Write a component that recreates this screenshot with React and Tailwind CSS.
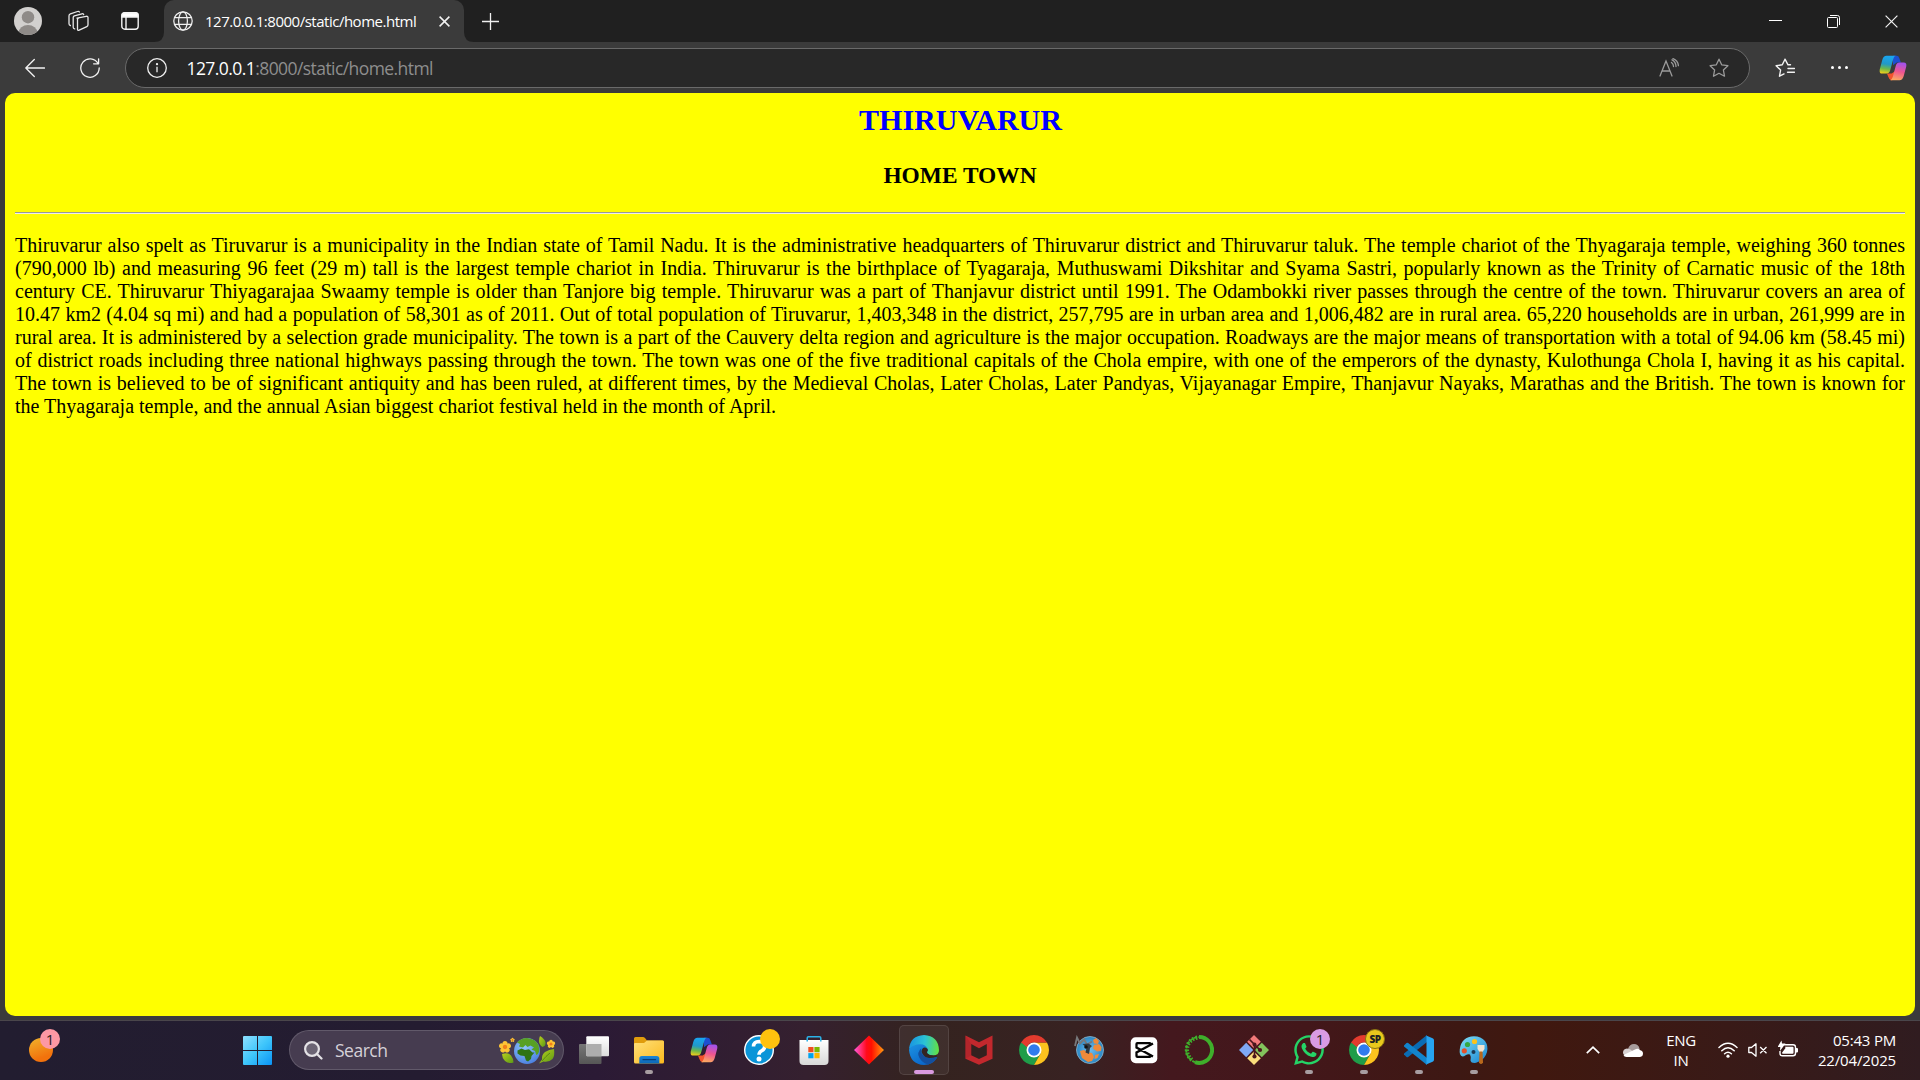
import React from "react";
import { FaWhatsapp } from "react-icons/fa";

const Svg = ({ s = 30, vb, className = "", children, ...rest }) => (
  <svg width={s} height={s} viewBox={vb || `0 0 ${s} ${s}`} fill="none" className={`block shrink-0 ${className}`} {...rest}>
    {children}
  </svg>
);

/* ---------- browser icons ---------- */
const Avatar = () => (
  <Svg s={28}>
    <defs><clipPath id="av"><circle cx="14" cy="14" r="14" /></clipPath></defs>
    <g clipPath="url(#av)">
      <rect width="28" height="28" fill="#d2d0ce" />
      <circle cx="14" cy="10.2" r="6.2" fill="#8f8b88" />
      <ellipse cx="14" cy="25.5" rx="9.3" ry="7.5" fill="#8f8b88" />
    </g>
  </Svg>
);
const Workspaces = () => (
  <Svg s={22} className="-ml-[1px]" stroke="#e8e8e8" strokeWidth="1.3" strokeLinejoin="round" strokeLinecap="round">
    <path d="M10 8.2 19.2 6.3q1.800-.3 1.800 1.300v7.200q0 1.300-1.200 1.800l-7.600 3.600q-1.700.7-1.700-1V9.600q0-1.200 1-1.500z" />
    <path d="M16.700 4.600q-.3-1.200-1.800-.8L7.400 5.900q-1.200.4-1.200 1.700v9.600q0 1.400 1.500 1.600" />
    <path d="M12.400 2q-.5-1-1.900-.5L3.400 3.900Q2 4.400 2 5.800v8q0 1.400 1.400 1.700" />
  </Svg>
);
const TabActions = () => (
  <Svg s={18} stroke="#f4f4f4" strokeWidth="1.4">
    <rect x=".8" y=".8" width="16.4" height="16.4" rx="3" />
    <path d="M1 5V3q0-2 2-2h12q2 0 2 2v2z" fill="#fff" />
    <path d="M5 5v12" />
  </Svg>
);
const Globe = () => (
  <Svg s={20} stroke="#f0f0f0" strokeWidth="1.25">
    <circle cx="10" cy="10" r="9.2" />
    <ellipse cx="10" cy="10" rx="4.4" ry="9.2" />
    <path d="M1.7 6.7h16.6M1.7 13.3h16.6" />
  </Svg>
);
const Cross = ({ s, w = 1.3 }) => (
  <Svg s={s} stroke="#f2f2f2" strokeWidth={w}><path d={`M.6.6 ${s - 0.6} ${s - 0.6}M${s - 0.6}.6.6 ${s - 0.6}`} /></Svg>
);
const star = "M10 1.2l2.7 5.6 6.2.9-4.5 4.3 1.1 6.2-5.5-2.9-5.5 2.9 1.1-6.2L1.1 7.7l6.2-.9z";

const Copilot = ({ s, id }) => (
  <Svg s={s} vb="0 0 30 30">
    <defs>
      <linearGradient id={id + "a"} x1="8" y1="2" x2="5" y2="21" gradientUnits="userSpaceOnUse">
        <stop stopColor="#19a5f0" /><stop offset=".45" stopColor="#2199c8" /><stop offset=".72" stopColor="#6cb84b" /><stop offset="1" stopColor="#f5cf18" />
      </linearGradient>
      <linearGradient id={id + "b"} x1="24" y1="10" x2="20" y2="28" gradientUnits="userSpaceOnUse">
        <stop stopColor="#a452ea" /><stop offset=".5" stopColor="#ef5590" /><stop offset="1" stopColor="#fba663" />
      </linearGradient>
    </defs>
    <path d="M15 2h4q2 0 2.800 2.500L23.500 9H19l-4 3z" fill="#1d4fd0" />
    <path d="M8.500 21h5l4.500-3-1 7q-.8 3-3 3h-1q-2 0-2.800-3z" fill="#f2542d" />
    <path d="M8 2h10q-2 .6-2.800 3.500L12 17.500q-1 3.500-4 3.500H3.500Q0 21 .8 16.500L3.500 6.500Q4.800 2 8 2z" fill={`url(#${id}a)`} />
    <path d="M22 28H12q2-.6 2.800-3.500L18 12.500Q19 9 22 9h4.500q3.500 0 2.700 4.500l-2.700 10Q25.200 28 22 28z" fill={`url(#${id}b)`} />
  </Svg>
);

/* ---------- taskbar icons ---------- */
const Start = () => (
  <Svg s={29}>
    <defs>
      <linearGradient id="win" x1="0" y1="0" x2="29" y2="29" gradientUnits="userSpaceOnUse">
        <stop stopColor="#8fe0ff" /><stop offset=".5" stopColor="#3fc6fb" /><stop offset="1" stopColor="#0a93f5" />
      </linearGradient>
    </defs>
    <path d="M0 1q0-1 1-1h13v14H0zM15 0h13q1 0 1 1v13H15zM0 15h14v14H1q-1 0-1-1zM15 15h14v13q0 1-1 1H15z" fill="url(#win)" />
  </Svg>
);

const Flower = ({ x, y, r }) => (
  <g transform={`translate(${x} ${y}) scale(${r})`}>
    {[0, 72, 144, 216, 288].map((a) => <circle key={a} cx="0" cy="-.6" r=".42" fill="#fdc535" transform={`rotate(${a})`} />)}
    <circle r=".36" fill="#f07f1b" />
  </g>
);
const EarthArt = () => (
  <svg width="58" height="30" viewBox="0 0 58 30" fill="none" className="block shrink-0">
    <defs>
      <radialGradient id="sea" cx=".4" cy=".35" r=".7"><stop stopColor="#8fc5fb" /><stop offset="1" stopColor="#4a7fe0" /></radialGradient>
      <linearGradient id="leaf" x1="0" y1="0" x2="1" y2="1"><stop stopColor="#b8cf1c" /><stop offset="1" stopColor="#5c9a16" /></linearGradient>
    </defs>
    <Flower x={7} y={12} r={6} />
    <Flower x={14.500} y={5} r={2.200} />
    <Flower x={53} y={9} r={4.200} />
    <path d="M4 19q6-2 9 1.500 2.500 3 2.500 7-5 1.500-8.500-1.500Q4 23 4 19z" fill="url(#leaf)" />
    <path d="M42 1q5 3 5.500 6.500Q48 11 44.500 12 41 9.500 41 6q0-3 1-5z" fill="url(#leaf)" />
    <path d="M56 14q1 7-1.500 10-3.500 3.500-9 2.500L41 28.500l3-4q-.5-5 3-7.500 4-2.500 9-3z" fill="url(#leaf)" />
    <path d="M44 26q4-5 8-8" stroke="#4f7d10" strokeWidth=".8" />
    <circle cx="29" cy="16" r="13" fill="url(#sea)" />
    <path d="M19 7.500q4-4.500 10-4.500 8 .5 11.500 7l.8 6q-1 3.500-3 4l-1.300-4-3.500-1.500 2.500-2-3.500-2-3 1.500-2-2-2.500 2.500-4-1 1-2.500z" fill="#58a024" />
    <path d="M19.500 15.500l4-2 3.500 1.500 4-.8 3.500 3.300h2l-3 3.500-.5 3-3 2.500-2-1-1.500-4.500-4-.5-3-2z" fill="#2f7415" />
  </svg>
);

const TaskView = () => (
  <Svg>
    <defs>
      <linearGradient id="tv" x1="0" y1="0" x2="0" y2="1"><stop stopColor="#ffffff" /><stop offset="1" stopColor="#dcdcdc" /></linearGradient>
      <linearGradient id="tv2" x1="0" y1="0" x2="0" y2="1"><stop stopColor="#777" /><stop offset="1" stopColor="#565656" /></linearGradient>
    </defs>
    <rect x="0" y="9" width="22.500" height="20" rx="1" fill="url(#tv2)" />
    <rect x="7.300" y="1.200" width="22.700" height="20" rx="1" fill="url(#tv)" />
    <path d="M7.300 9h15.200v12.200H8.300q-1 0-1-1z" fill="#adadad" />
  </Svg>
);
const Explorer = () => (
  <Svg>
    <defs>
      <linearGradient id="fo" x1="0" y1="0" x2="1" y2="1"><stop stopColor="#ffe07a" /><stop offset="1" stopColor="#fbb91d" /></linearGradient>
      <linearGradient id="fb" x1="0" y1="0" x2="0" y2="1"><stop stopColor="#1b86d8" /><stop offset="1" stopColor="#0c66b5" /></linearGradient>
    </defs>
    <path d="M0 3.500Q0 2 1.500 2H9q1 0 2 1l2 2.500H28q2 0 2 2V12H0z" fill="#e09c0c" />
    <path d="M0 9q0-1 1-1h9l3-2.500h16q1 0 1 1.500v20q0 1.500-1.500 1.500h-27Q0 28.500 0 27z" fill="url(#fo)" />
    <path d="M5.300 28.500v-5q0-2.500 2.500-2.500h15q2.500 0 2.500 2.500v5z" fill="url(#fb)" />
    <path d="M9 24.700h12.500" stroke="#073f7a" strokeWidth="1.200" strokeLinecap="round" />
  </Svg>
);
const Help = () => (
  <Svg>
    <circle cx="15" cy="15" r="14.300" fill="#0a95d8" stroke="#fff" strokeWidth="1.400" />
    <path d="M9.500 11.500q.3-5 5.500-5 5.700.2 5.700 4.700 0 2.800-3 4.600-2.700 1.500-2.700 4" stroke="#fff" strokeWidth="3.600" />
    <circle cx="15" cy="24" r="2.500" fill="#fff" />
  </Svg>
);
const Store = () => (
  <Svg>
    <defs><linearGradient id="st" x1="0" y1="0" x2="0" y2="1"><stop stopColor="#fff" /><stop offset="1" stopColor="#d8d8d8" /></linearGradient></defs>
    <path d="M.5 5h29v21q0 4-4 4h-21q-4 0-4-4z" fill="url(#st)" />
    <path d="M8.200 6.500V3q0-1.300 1.300-1.300h11q1.300 0 1.300 1.300v3.500" stroke="#2bb2e8" strokeWidth="1.500" />
    <path d="M9.300 12h5.200v5.200H9.300z" fill="#f04e1f" />
    <path d="M15.400 12h5.200v5.200h-5.200z" fill="#7db700" />
    <path d="M9.300 18.100h5.200v5.200H9.300z" fill="#00a3ee" />
    <path d="M15.400 18.100h5.200v5.200h-5.200z" fill="#fdb700" />
  </Svg>
);
const Diamond = () => (
  <Svg>
    <defs><linearGradient id="di" x1="0" y1="0" x2="1" y2="0"><stop stopColor="#ff5be0" /><stop offset=".42" stopColor="#ff0a1a" /><stop offset=".58" stopColor="#ff1000" /><stop offset="1" stopColor="#ff9a10" /></linearGradient></defs>
    <path d="M15 .5 30 15 15 29.500 0 15z" fill="url(#di)" />
  </Svg>
);
const Edge = () => (
  <Svg vb="0 0 24 24">
    <defs>
      <linearGradient id="e1" x1="2" y1="8" x2="23" y2="10" gradientUnits="userSpaceOnUse"><stop stopColor="#1c9be0" /><stop offset=".5" stopColor="#2bc3d4" /><stop offset="1" stopColor="#5fdf4c" /></linearGradient>
      <linearGradient id="e2" x1="2" y1="8" x2="12" y2="24" gradientUnits="userSpaceOnUse"><stop stopColor="#1b8fe0" /><stop offset="1" stopColor="#0a66c8" /></linearGradient>
    </defs>
    <path d="M0 12Q1 6 8 6q7 0 8 6l-1 4 7.500 2Q19 24 12 24 1 23.500 0 12z" fill="url(#e2)" />
    <path d="M9.800 10.500Q6 14 8.200 18q2.300 4.500 7.300 5.500 4.500-1.500 7-5.300.300-.900-.600-.600-5.400 2-9.300-.400Q8.800 14.500 9.800 10.500z" fill="#134f9e" />
    <path d="M24 12.200q0 4-4.300 4.200-3.700 0-5-1.800-.8-1 .2-1.800.4-.6 0-1.600Q13.500 7.500 9 7.400 3.500 7.500.1 11 1 .6 12 0q11.500.5 12 12.200z" fill="url(#e1)" />
    <path d="M14.900 11.200q-2.300-2-4-.500-1.600 1.800-.300 4 1.800 3.200 5.400 3.700 3 .200 6-1l.400-1.700q-1.200.700-2.700.700-3.700 0-5-1.800-.8-1 .2-1.800.4-.6 0-1.600z" fill="#342423" />
  </Svg>
);
const McAfee = () => (
  <Svg>
    <path d="M1.500.5 15 7.200 28.500.5v23.300L15 29.800 1.500 23.800z" fill="#c2282d" />
    <path d="M7.200 9 15 13.300 22.800 9v11.300L15 24l-7.800-3.700z" fill="#33211f" />
    <path d="M1.500.5v23.300l5.700-3.500V9z" fill="#a82229" opacity=".55" />
  </Svg>
);
const Chrome = () => (
  <Svg>
    <path d="M2.010 7.500A15 15 0 0 0 15 30l6.500-11.250L15 15z" fill="#1f9d49" />
    <path d="M27.990 7.500H15l6.500 11.250L15 30A15 15 0 0 0 27.990 7.500z" fill="#fcc31e" />
    <path d="M2.010 7.500A15 15 0 0 1 27.990 7.500H15q-5.500 0-7 5z" fill="#e33b2e" />
    <path d="M2.010 7.500 8.500 18.750 12 15 8 12.500z" fill="#1f9d49" />
    <circle cx="15" cy="15" r="7.500" fill="#fff" />
    <circle cx="15" cy="15" r="5.800" fill="#2f7bee" />
  </Svg>
);
const SatelliteGlobe = () => (
  <Svg>
    <defs><radialGradient id="sg"><stop stopColor="#6dbdf0" /><stop offset="1" stopColor="#2a87c4" /></radialGradient></defs>
    <circle cx="16" cy="15" r="13.500" fill="url(#sg)" stroke="#8fb6cc" strokeWidth=".8" />
    <path d="M19 5l3-2 3 3-1 3-4-.5zM20 10l5-1 2.500 3-.5 4-4 .5-4-3zM6 16l4-1 3 2 5 1 2 4-2 4-4 1-6-4zM21 20l4-1-1.500 4-3 1z" fill="#ef8a3a" />
    <path d="M1 11 3 2.500l3 6 4-4 3 5 5-3" stroke="#77797c" strokeWidth="1.800" />
    <path d="M8.500 9l6-.5 3.500 2.500-2 2-1 6-3.500-1.500 1-4.500z" fill="#303a44" />
    <circle cx="12" cy="12" r="1.800" fill="#111" />
  </Svg>
);
const CapCut = () => (
  <Svg>
    <rect x="1.700" y="2.200" width="26.600" height="26" rx="5" fill="#fff" />
    <path d="M24 8.500 7.500 17.500V21q0 .8.800.8h12.400q.8 0 .8-.8v-1.800M24 21.500 7.500 12.500V9q0-.8.800-.8h12.400q.8 0 .8.800v1.800" stroke="#050505" strokeWidth="2.300" />
  </Svg>
);
const Anaconda = () => (
  <Svg>
    <path d="M15 2.100A12.900 12.900 0 1 1 11 27.200" stroke="#3faf2b" strokeWidth="4" />
    <path d="M11 27.200A12.900 12.900 0 0 1 15 2.100" stroke="#3faf2b" strokeWidth="1.900" strokeDasharray="3 1.400" />
    <path d="M8 24.800A12.300 12.300 0 0 1 15 2.500" stroke="#3faf2b" strokeWidth="4.200" strokeDasharray="1.700 1.700" />
  </Svg>
);
const Git = () => (
  <Svg>
    <path d="M15 0l6.800 6.800L15 13.600 8.200 6.800z" fill="#f27a7a" />
    <path d="M22.800 7.800 30 15l-7.200 7.200L15.800 15z" fill="#83c35c" />
    <path d="M7.200 7.800 14.200 15l-7 7.200L0 15z" fill="#7fa9f5" />
    <path d="M15 16.400l6.800 6.800L15 30l-6.800-6.800z" fill="#fbdd7c" />
    <path d="M10.500 4.500 15.500 9.500v12.500M15.500 9.500l5.500 5.500" stroke="#4a161c" strokeWidth="1.700" />
    <circle cx="15.500" cy="9.500" r="2" fill="#4a161c" /><circle cx="21" cy="15" r="2.100" fill="#4a161c" /><circle cx="15.500" cy="21.500" r="2.100" fill="#4a161c" />
  </Svg>
);
const VSCode = () => (
  <Svg>
    <path d="M0 19.500 2.500 22q.8.600 1.700 0L23 7V0L.300 18.300q-.700.600-.300 1.200z" fill="#0a6cb4" />
    <path d="M0 10.500 2.500 8q.8-.600 1.700 0L23 23v7L.300 11.700q-.700-.600-.300-1.200z" fill="#1284cc" />
    <path d="M21.500.2 28.600 3.200Q30 3.800 30 5.300v19.400q0 1.500-1.400 2.100l-7.100 3q1 .2 1-1.300V1.500q0-1.500-1-1.300z" fill="#27a5f2" />
  </Svg>
);
const Paint = () => (
  <Svg>
    <defs><linearGradient id="pa" x1="0" y1="0" x2="1" y2="1"><stop stopColor="#7fe0f7" /><stop offset="1" stopColor="#1783d0" /></linearGradient></defs>
    <path d="M15 1.300q7 0 11 4.700 3.500 5 2 11-2 7-8 9.500-3.500 1.500-4.500 1.500-3.500 0-4-2.500 1-3.500-.5-6-2-.6-4 .5-2 1.500-3.500 1.500Q0 21 .8 14 2.500 2 15 1.300z" fill="url(#pa)" />
    <circle cx="15.500" cy="6.500" r="2.600" fill="#fbc21c" /><circle cx="8.500" cy="9.500" r="2.600" fill="#35a844" /><circle cx="5.300" cy="15.800" r="2.600" fill="#e4512b" />
    <circle cx="14.500" cy="17" r="2" fill="#1b3c58" />
    <path d="M18.500 10h7v4l-2 3h-3l-2-3z" fill="#f1e3d0" />
    <path d="M20.500 16.500h3l.5 11q-2 3-4 0z" fill="#b9681c" />
  </Svg>
);

const TaskCell = ({ children, running, active, badge }) => (
  <div className="relative flex h-[50px] w-[55px] shrink-0 items-center justify-center">
    {active && <div className="absolute inset-y-0 left-[2.500px] right-[2.500px] rounded-[5px] border border-white/10 bg-white/[0.06]" />}
    <div className="relative">{children}</div>
    {badge}
    {running && <div className="absolute bottom-[1px] left-[23.500px] h-[4px] w-[8px] rounded-full bg-[#a79da1]" />}
    {active && <div className="absolute bottom-[1px] left-[17.500px] h-[4px] w-[20px] rounded-full bg-[#d99be0]" />}
  </div>
);
const Badge = ({ className, children }) => (
  <div className={`absolute left-[28.500px] top-[4px] flex h-[20px] w-[20px] items-center justify-center rounded-full font-['Open_Sans',sans-serif] leading-none text-[#222] ${className}`}>{children}</div>
);

const Glyph = ({ w, children }) => <div className={`flex shrink-0 items-center justify-center ${w}`}>{children}</div>;

export default function App() {
  return (
    <div className="flex h-[1080px] w-[1920px] flex-col overflow-hidden bg-[#3b3b3b] font-['Open_Sans',sans-serif] text-white">
      {/* tab strip */}
      <header className="flex h-[42px] shrink-0 bg-[#202020]">
        <Glyph w="w-[56px]"><Avatar /></Glyph>
        <Glyph w="w-[44px]"><Workspaces /></Glyph>
        <Glyph w="w-[60px]"><TabActions /></Glyph>
        <div className="relative ml-[4px] flex w-[300px] items-center rounded-t-[10px] bg-[#3b3b3b] pl-[9px]">
          <svg className="absolute -left-[10px] bottom-0" width="10" height="10"><path d="M10 0v10H0Q10 10 10 0z" fill="#3b3b3b" /></svg>
          <svg className="absolute -right-[10px] bottom-0" width="10" height="10"><path d="M0 0v10h10Q0 10 0 0z" fill="#3b3b3b" /></svg>
          <Globe />
          <span className="mb-[1px] ml-[12px] w-[234px] whitespace-nowrap text-[15px] leading-[20px] tracking-[-0.490px]">127.0.0.1:8000/static/home.html</span>
          <Cross s={11} w={1.500} />
        </div>
        <Glyph w="w-[53px]"><Svg s={17} stroke="#f0f0f0" strokeWidth="1.300"><path d="M8.500 0v17M0 8.500h17" /></Svg></Glyph>
        <div className="ml-auto flex">
          <Glyph w="w-[58px]"><div className="mb-[2px] h-px w-[13px] bg-white" /></Glyph>
          <Glyph w="w-[58px]"><Svg s={13} stroke="#fff" strokeWidth="1"><rect x=".5" y="2.500" width="10" height="10" rx="1" /><path d="M3 .5h7.500q2 0 2 2V10" /></Svg></Glyph>
          <Glyph w="w-[58px]"><Cross s={13} w={1.200} /></Glyph>
        </div>
      </header>

      {/* toolbar */}
      <div className="flex h-[51px] shrink-0 items-center pl-[7.500px]">
        <Glyph w="w-[55px]"><Svg s={20} stroke="#f2f2f2" strokeWidth="1.300" strokeLinecap="round" strokeLinejoin="round"><path d="M19.500 10H.8M9.300 1.500.8 10l8.500 8.500" /></Svg></Glyph>
        <Glyph w="w-[55px]"><Svg s={20} stroke="#f2f2f2" strokeWidth="1.300" strokeLinecap="round" strokeLinejoin="round"><path d="M18 5.500A9.200 9.200 0 1 0 19.200 10M18.600.8v5h-5" /></Svg></Glyph>
        <div className="ml-[7.500px] flex h-[40px] w-[1625px] items-center rounded-full border border-[#6a6a6a] bg-[#282828] pl-[21px]">
          <Svg s={20} stroke="#f0f0f0" strokeWidth="1.300"><circle cx="10" cy="10" r="9.300" /><path d="M10 8.800v5.500" /><circle cx="10" cy="6.200" r=".5" fill="#fff" /></Svg>
          <span className="ml-[19.500px] whitespace-nowrap text-[17.500px] leading-[24px] tracking-[-0.570px] text-[#8e8e8e]"><span className="text-white">127.0.0.1</span>:8000/static/home.html</span>
          <div className="ml-auto flex pr-[5px]">
            <Glyph w="w-[50px]">
              <Svg s={20} stroke="#9b9b9b" strokeWidth="1.300" strokeLinecap="round"><path d="M1 18 7 3l6 15M3.200 13h7.600M12.500 4.500q2 1.500 2 4M13 1.800q4 2 4 6.700M14 .6q5 2 5.400 7" /></Svg>
            </Glyph>
            <Glyph w="w-[50px]"><Svg s={20} stroke="#9b9b9b" strokeWidth="1.300" strokeLinejoin="round"><path d={star} /></Svg></Glyph>
          </div>
        </div>
        <div className="ml-[7.500px] flex">
          <Glyph w="w-[55px]">
            <Svg s={20} stroke="#f2f2f2" strokeWidth="1.400" strokeLinejoin="round" strokeLinecap="round"><path d="M13 6.800 10 1.200 7.300 6.800l-6.200.9 4.500 4.300-1.100 6.200 4.500-2.300M13 6.800h2.500M13 10.500h6.500M12.500 14.200h7" /></Svg>
          </Glyph>
          <Glyph w="w-[54px]"><div className="flex gap-[4px]"><i className="h-[3px] w-[3px] rounded-full bg-white" /><i className="h-[3px] w-[3px] rounded-full bg-white" /><i className="h-[3px] w-[3px] rounded-full bg-white" /></div></Glyph>
          <Glyph w="w-[52px]"><Copilot s={28} id="c1" /></Glyph>
        </div>
      </div>

      {/* page */}
      <main className="mx-[5px] h-[923px] shrink-0 rounded-[10px] bg-[#ffff00] px-[10px] pt-[10px] font-['Liberation_Serif',serif] text-black">
        <h2 className="pl-[1px] text-center text-[30px] font-bold leading-[34px] text-[#0000ff]">THIRUVARUR</h2>
        <h3 className="mt-[25px] text-center text-[23.400px] font-bold leading-[27px]">HOME TOWN</h3>
        <div className="mt-[23px] h-[2px] border-t border-t-[#9a9a9a] border-b border-b-[#eeeeee]" />
        <p className="mt-[20px] text-justify text-[20px] leading-[23px]">
          Thiruvarur also spelt as Tiruvarur is a municipality in the Indian state of Tamil Nadu. It is the administrative headquarters of Thiruvarur district and Thiruvarur taluk. The temple chariot of the Thyagaraja temple, weighing 360 tonnes (790,000 lb) and measuring 96 feet (29 m) tall is the largest temple chariot in India. Thiruvarur is the birthplace of Tyagaraja, Muthuswami Dikshitar and Syama Sastri, popularly known as the Trinity of Carnatic music of the 18th century CE. Thiruvarur Thiyagarajaa Swaamy temple is older than Tanjore big temple. Thiruvarur was a part of Thanjavur district until 1991. The Odambokki river passes through the centre of the town. Thiruvarur covers an area of 10.47 km2 (4.04 sq mi) and had a population of 58,301 as of 2011. Out of total population of Tiruvarur, 1,403,348 in the district, 257,795 are in urban area and 1,006,482 are in rural area. 65,220 households are in urban, 261,999 are in rural area. It is administered by a selection grade municipality. The town is a part of the Cauvery delta region and agriculture is the major occupation. Roadways are the major means of transportation with a total of 94.06 km (58.45 mi) of district roads including three national highways passing through the town. The town was one of the five traditional capitals of the Chola empire, with one of the emperors of the dynasty, Kulothunga Chola I, having it as his capital. The town is believed to be of significant antiquity and has been ruled, at different times, by the Medieval Cholas, Later Cholas, Later Pandyas, Vijayanagar Empire, Thanjavur Nayaks, Marathas and the British. The town is known for the Thyagaraja temple, and the annual Asian biggest chariot festival held in the month of April.
        </p>
      </main>

      {/* taskbar */}
      <footer className="mt-[4px] flex h-[60px] shrink-0 items-center border-t border-[#4a464b] bg-[linear-gradient(90deg,#221d30_0%,#241c31_22%,#2b1a35_31%,#35202f_42%,#34231f_48%,#382222_56%,#44181e_61%,#43171a_68%,#3d1813_76%,#40180f_80%,#391a17_90%,#301c20_100%)] pb-px">
        <div className="relative ml-[29px] h-[24px] w-[24px] rounded-full bg-[linear-gradient(160deg,#f0b32c,#f2720c_75%)]">
          <div className="absolute left-[11px] -top-[9px] flex h-[20px] w-[20px] items-center justify-center rounded-full bg-[#fd98a4] text-[15px] leading-none text-[#2a1c20]">1</div>
        </div>
        <div className="ml-[190px]"><Start /></div>
        <div className="ml-[17px] flex h-[40px] w-[275px] items-center rounded-full border border-white/15 bg-[#463c50] pl-[14px] pr-[7px]">
          <Svg s={19} stroke="#e4e2e6" strokeWidth="2.200" strokeLinecap="round"><circle cx="8" cy="8" r="6.900" fill="#6b6474" /><path d="m13 13 4.500 4.500" /></Svg>
          <span className="ml-[12px] text-[17.500px] leading-[24px] tracking-[-0.500px] text-[#d5d1d8]">Search</span>
          <div className="ml-auto"><EarthArt /></div>
        </div>
        <div className="ml-[2.500px] flex">
          <TaskCell><TaskView /></TaskCell>
          <TaskCell running><Explorer /></TaskCell>
          <TaskCell><Copilot s={28} id="c2" /></TaskCell>
          <TaskCell badge={<Badge className="bg-[#ffc20e]" />}><Help /></TaskCell>
          <TaskCell><Store /></TaskCell>
          <TaskCell><Diamond /></TaskCell>
          <TaskCell active><Edge /></TaskCell>
          <TaskCell><McAfee /></TaskCell>
          <TaskCell><Chrome /></TaskCell>
          <TaskCell><SatelliteGlobe /></TaskCell>
          <TaskCell><CapCut /></TaskCell>
          <TaskCell><Anaconda /></TaskCell>
          <TaskCell><Git /></TaskCell>
          <TaskCell running badge={<Badge className="bg-[#d99be3] text-[15px]">1</Badge>}><FaWhatsapp size={34} color="#25d366" /></TaskCell>
          <TaskCell running badge={<Badge className="border border-[#8a7412] bg-[#e9c81c] text-[10px] font-black tracking-[-0.500px]">SP</Badge>}><Chrome /></TaskCell>
          <TaskCell running><VSCode /></TaskCell>
          <TaskCell running><Paint /></TaskCell>
        </div>
        <div className="ml-auto flex items-center">
          <Glyph w="w-[40px]"><svg width="14" height="8" fill="none" className="block"><path d="m.8 7.200 6.200-6 6.200 6" stroke="#fff" strokeWidth="1.700" /></svg></Glyph>
          <Glyph w="w-[40px]">
            <svg width="20" height="13" className="block"><path d="M5 5Q6.500 0 11 0t5.500 4.500L17 9H3z" fill="#a79c9c" /><path d="M4 4.500q3 0 6 3l-5 4Q0 12 0 8.500t4-4z" fill="#d8d2d2" /><path d="M3.500 13Q1 13 .5 11L12 5.500q1.500-1 3-.7 1.200.3 1.700 1.200 3.300.5 3.300 3.500T17 13z" fill="#fff" /></svg>
          </Glyph>
          <div className="w-[56px] text-center text-[15px] leading-[20px] tracking-[-0.300px]"><div>ENG</div><div>IN</div></div>
          <div className="ml-[9px] flex items-center">
            <Svg s={20} stroke="#fff" strokeWidth="1.500" strokeLinecap="round"><path d="M1 7.500q9-8.500 18 0M3.800 10.700q6.200-5.800 12.400 0M6.600 13.700q3.400-3 6.800 0" /><circle cx="10" cy="16.200" r="1.600" fill="#fff" stroke="none" /></Svg>
            <Svg s={20} className="ml-[10px]" stroke="#fff" strokeWidth="1.300" strokeLinejoin="round"><path d="M.8 7.500h2.700L8 3.800v12.400l-4.500-3.700H.8zM12.200 7l6.300 6.300M18.500 7l-6.300 6.300" /></Svg>
            <Svg s={20} className="ml-[10px]"><path d="M6 4.800h9q2.500 0 2.500 2.500v6q0 2.500-2.500 2.500H4.500q-2.500 0-2.500-2.500V11" stroke="#fff" strokeWidth="1.400" /><path d="M7 6.800h7.500q1 0 1 1v5q0 1-1 1H5q-1 0-1-1L7.500 8zM18 8h1q1 0 1 1v2.500q0 1-1 1h-1zM3.500.5l.5 3h3.500L2 11l.3-4H-.5z" fill="#fff" /></Svg>
          </div>
          <div className="ml-[18px] mr-[24px] w-[80px] whitespace-nowrap text-right text-[15px] leading-[20px]"><div className="tracking-[-0.200px]">05:43 PM</div><div className="tracking-[-0.150px]">22/04/2025</div></div>
        </div>
      </footer>
    </div>
  );
}
